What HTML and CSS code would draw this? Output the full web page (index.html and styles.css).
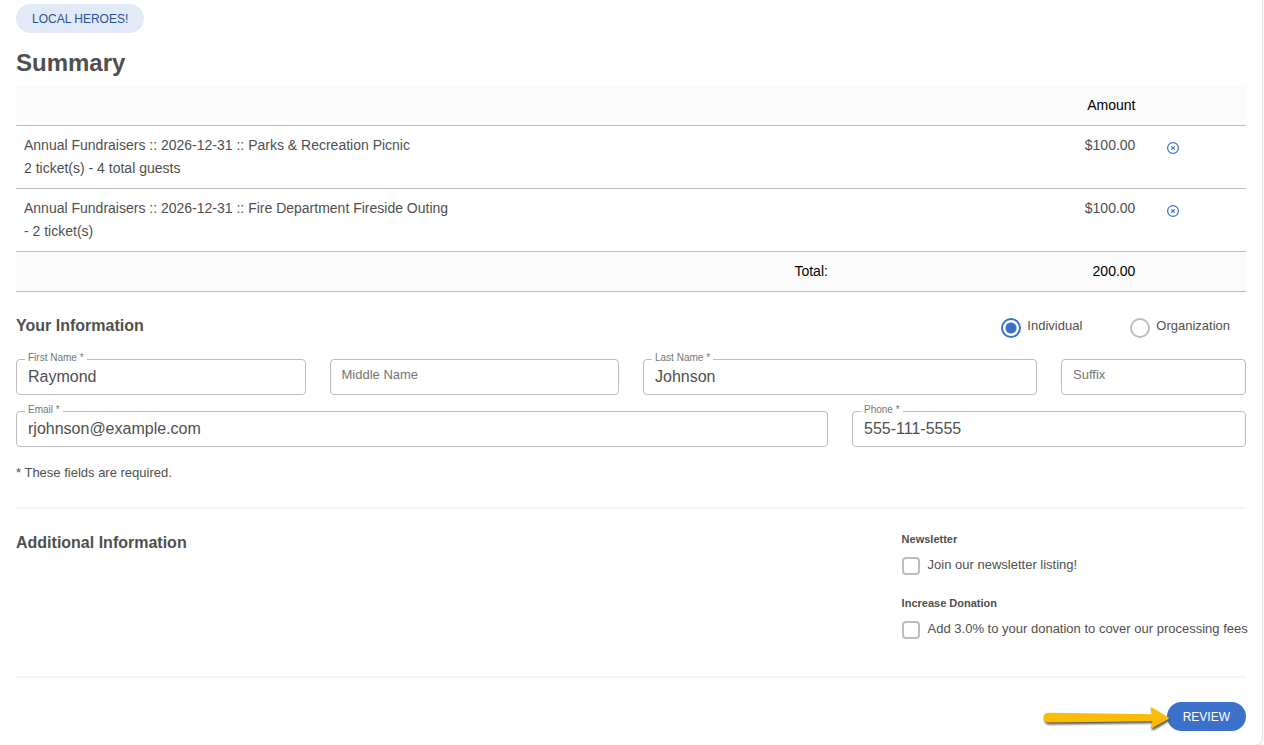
FILE: index.html
```html
<!DOCTYPE html>
<html lang="en">
<head>
    <meta charset="UTF-8">
    <meta name="viewport" content="width=device-width, initial-scale=1.0">
    <title>Summary</title>
    <link rel="stylesheet" href="styles.css">
</head>
<body>
    <main class="card">
        <button type="button" class="btn btn-light">LOCAL HEROES!</button>

        <h2>Summary</h2>
        <table class="summary">
            <colgroup>
                <col class="col-item">
                <col class="col-amount">
                <col class="col-action">
            </colgroup>
            <thead>
                <tr>
                    <th></th>
                    <th class="amount">Amount</th>
                    <th></th>
                </tr>
            </thead>
            <tbody>
                <tr>
                    <td>Annual Fundraisers :: 2026-12-31 :: Parks &amp; Recreation Picnic<br>2 ticket(s) - 4 total guests</td>
                    <td class="amount">$100.00</td>
                    <td class="action">
                        <button type="button" class="remove" aria-label="Remove">
                            <svg width="12" height="12" viewBox="0 0 12 12"><circle cx="6" cy="6" r="5.4"/><path d="M4.3 4.3l3.4 3.4M7.7 4.3L4.3 7.7"/></svg>
                        </button>
                    </td>
                </tr>
                <tr>
                    <td>Annual Fundraisers :: 2026-12-31 :: Fire Department Fireside Outing<br>- 2 ticket(s)</td>
                    <td class="amount">$100.00</td>
                    <td class="action">
                        <button type="button" class="remove" aria-label="Remove">
                            <svg width="12" height="12" viewBox="0 0 12 12"><circle cx="6" cy="6" r="5.4"/><path d="M4.3 4.3l3.4 3.4M7.7 4.3L4.3 7.7"/></svg>
                        </button>
                    </td>
                </tr>
            </tbody>
            <tfoot>
                <tr>
                    <td class="amount">Total:</td>
                    <td class="amount">200.00</td>
                    <td></td>
                </tr>
            </tfoot>
        </table>

        <form>
            <div class="section-head">
                <h3>Your Information</h3>
                <div class="types">
                    <div class="check">
                        <input type="radio" id="individual" name="type" checked>
                        <label for="individual">Individual</label>
                    </div>
                    <div class="check">
                        <input type="radio" id="organization" name="type">
                        <label for="organization">Organization</label>
                    </div>
                </div>
            </div>

            <div class="fields">
                <div class="field span-3">
                    <input type="text" id="firstName" value="Raymond" required>
                    <label for="firstName">First Name *</label>
                </div>
                <div class="field empty span-3">
                    <input type="text" id="middleName">
                    <label for="middleName">Middle Name</label>
                </div>
                <div class="field span-4">
                    <input type="text" id="lastName" value="Johnson" required>
                    <label for="lastName">Last Name *</label>
                </div>
                <div class="field empty span-2">
                    <input type="text" id="suffix">
                    <label for="suffix">Suffix</label>
                </div>
                <div class="field span-8">
                    <input type="email" id="email" value="rjohnson@example.com" required>
                    <label for="email">Email *</label>
                </div>
                <div class="field span-4">
                    <input type="tel" id="phone" value="555-111-5555" required>
                    <label for="phone">Phone *</label>
                </div>
            </div>
            <p class="note">* These fields are required.</p>

            <hr>

            <div class="additional">
                <h3>Additional Information</h3>
                <div class="options">
                    <h4>Newsletter</h4>
                    <div class="check">
                        <input type="checkbox" id="newsletter">
                        <label for="newsletter">Join our newsletter listing!</label>
                    </div>
                    <h4>Increase Donation</h4>
                    <div class="check">
                        <input type="checkbox" id="fees">
                        <label for="fees">Add 3.0% to your donation to cover our processing fees</label>
                    </div>
                </div>
            </div>

            <hr>

            <div class="actions">
                <div class="review">
                    <button type="button" class="btn btn-primary">REVIEW</button>
                    <svg class="arrow" width="132" height="32" viewBox="0 0 132 32">
                        <path d="M9 10.800L112.500 12.300L110.500 6.500Q110.500 5 112.500 6L128.500 15.500Q129.500 16.300 128 17.300L112.500 26Q110.500 26.500 110.500 25L112.500 19.300L9 20.500Q3.500 20.500 3.500 15.700Q3.500 10.800 9 10.800Z"/>
                    </svg>
                </div>
            </div>
        </form>
    </main>
</body>
</html>
```

FILE: styles.css
```css
* {
    box-sizing: border-box;
}
body {
    margin: 0;
    background-color: #fbfbfb;
    color: #4f4f4f;
    font-family: "Liberation Sans", Arial, sans-serif;
    font-size: 13px;
    line-height: 20px;
}
.card {
    margin-right: 1px;
    padding: 4px 16px 13px;
    border-right: 1px solid #e0e0e0;
    border-bottom: 1px solid #e0e0e0;
    border-bottom-right-radius: 8px;
    background-color: #fff;
}
h2, h3, h4 {
    margin: 0;
}
h2 {
    margin: 16px 0 9px;
    font-size: 24px;
    line-height: 28px;
}
h3 {
    font-size: 16px;
    line-height: 20px;
}
h4 {
    font-size: 11px;
    line-height: 16px;
}
.btn {
    display: block;
    height: 29px;
    padding: 0 16px;
    border: none;
    border-radius: 15px;
    font-family: inherit;
    font-size: 12px;
    cursor: pointer;
}
.btn-light {
    background-color: #e2eaf7;
    color: #285192;
}
.btn-primary {
    background-color: #3b71ca;
    color: #fff;
}

/* summary table */
.summary {
    width: 100%;
    table-layout: fixed;
    border-collapse: separate;
    border-spacing: 0;
    font-size: 14px;
    line-height: 23px;
}
.col-item {
    width: 66.66%;
}
.col-amount {
    width: 25%;
}
.summary th, .summary td {
    height: 40px;
    padding: 8px;
    border-bottom: 1px solid #bdbdbd;
    font-weight: normal;
    text-align: left;
    vertical-align: top;
}
.summary thead, .summary tfoot {
    background-color: #fbfbfb;
    color: #000;
}
.summary .amount {
    text-align: right;
}
.summary .action {
    padding: 16px 24px 8px;
}
.remove {
    display: block;
    padding: 0;
    border: none;
    background: none;
    cursor: pointer;
}
.remove svg {
    display: block;
    fill: none;
    stroke: #3b71ca;
    stroke-width: 1.2;
}

/* form */
.section-head {
    display: flex;
    justify-content: space-between;
    margin: 24px 0 21px;
}
.types {
    display: flex;
    gap: 48px;
    padding-right: 16px;
}
.check {
    display: flex;
    gap: 8px;
}
.check input {
    appearance: none;
    flex: none;
    width: 18px;
    height: 18px;
    margin: 2px 0 0;
    border: 2px solid #bdbdbd;
    border-radius: 4px;
    background-color: #fff;
}
.check input[type="radio"] {
    width: 20px;
    height: 20px;
    border-radius: 50%;
}
.types .check {
    gap: 6px;
}
.check input[type="radio"]:checked {
    border-color: #3b71ca;
    background: radial-gradient(circle, #3b71ca 5px, #fff 6px);
}
.fields {
    display: grid;
    grid-template-columns: repeat(12, 1fr);
    gap: 16px 24px;
}
.span-2 {
    grid-column: span 2;
}
.span-3 {
    grid-column: span 3;
}
.span-4 {
    grid-column: span 4;
}
.span-8 {
    grid-column: span 8;
}
.field {
    position: relative;
}
.field input {
    display: block;
    width: 100%;
    height: 36px;
    padding: 0 11px;
    border: 1px solid #bdbdbd;
    border-radius: 4px;
    background-color: #fff;
    color: #4f4f4f;
    font-family: inherit;
    font-size: 16px;
}
.field label {
    position: absolute;
    top: -7px;
    left: 9px;
    padding: 0 3px;
    background-color: #fff;
    color: #757575;
    font-size: 10px;
    line-height: 12px;
}
.field.empty label {
    top: 6px;
    font-size: 13px;
    line-height: 20px;
}
.note {
    margin: 16px 0 0;
}
hr {
    height: 2px;
    margin: 24px 0;
    border: none;
    background-color: #f5f5f5;
}
.additional {
    display: flex;
    justify-content: space-between;
    margin-top: -2px;
}
.additional h3 {
    padding-top: 2px;
}
.options {
    width: 28%;
    padding-bottom: 13px;
    white-space: nowrap;
}
.options .check {
    margin: 8px 0 20px;
}
.options .check:last-child {
    margin-bottom: 0;
}
.actions {
    display: flex;
    justify-content: flex-end;
    padding-bottom: 1px;
}
.review {
    position: relative;
}
.arrow {
    position: absolute;
    top: 0;
    right: 74px;
    overflow: visible;
    fill: #fbbc05;
    filter: drop-shadow(1px 2px 1px #555);
    pointer-events: none;
}
```
